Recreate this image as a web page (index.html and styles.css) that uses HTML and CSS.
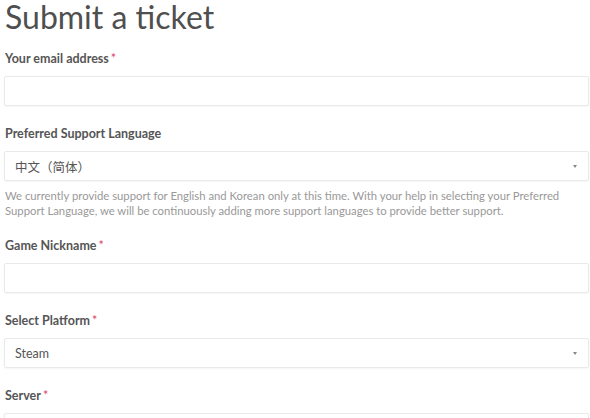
FILE: index.html
```html
<!DOCTYPE html>
<html>
<head>
<meta charset="utf-8">
<link rel="stylesheet" href="styles.css">
</head>
<body>
<div class="page">
  <h1 class="title">Submit a ticket</h1>
  <form class="form">
    <div class="group">
      <label class="label">Your email address<span class="req">*</span></label>
      <div class="input"></div>
    </div>
    <div class="group">
      <label class="label">Preferred Support Language</label>
      <div class="input select"><span class="value">中文（简体）</span><span class="arrow"></span></div>
      <p class="help">We currently provide support for English and Korean only at this time. With your help in selecting your Preferred Support Language, we will be continuously adding more support languages to provide better support.</p>
    </div>
    <div class="group">
      <label class="label">Game Nickname<span class="req">*</span></label>
      <div class="input"></div>
    </div>
    <div class="group">
      <label class="label">Select Platform<span class="req">*</span></label>
      <div class="input select"><span class="value">Steam</span><span class="arrow"></span></div>
    </div>
    <div class="group">
      <label class="label">Server<span class="req">*</span></label>
      <div class="input"></div>
    </div>
  </form>
</div>
</body>
</html>
```
FILE: styles.css
```css
* { box-sizing: border-box; }
html, body { margin: 0; padding: 0; background: #fff; }
body { font-family: "Lato", "Noto Sans CJK SC", sans-serif; color: #555; }
.page { padding: 0 1px 0 4px; }
.title {
  margin: 0 0 0 1px;
  font-size: 32px;
  line-height: 34px;
  font-weight: 400;
  color: #4f4f4f;
  height: 50px;
}
.group { margin-bottom: 19px; }
.label {
  display: block;
  font-size: 12.5px;
  line-height: 18px;
  font-weight: 700;
  color: #555;
  margin: 0 0 8px 1px;
}
.req { color: #e0405f; margin-left: 2px; font-weight: 400; }
.input {
  height: 30px;
  border: 1px solid #e9e9e9;
  border-radius: 2px;
  box-shadow: 0 1px 2px rgba(0,0,0,0.04);
  background: #fff;
}
.select {
  display: flex;
  align-items: center;
  justify-content: space-between;
  padding: 0 11px 0 10px;
  font-size: 12.5px;
  color: #555;
}
.arrow {
  width: 0; height: 0;
  border-left: 2px solid transparent;
  border-right: 2px solid transparent;
  border-top: 3px solid #888;
}
.help {
  margin: 7px 0 0 1px;
  font-size: 11.3px;
  line-height: 15px;
  color: #999;
}
```
